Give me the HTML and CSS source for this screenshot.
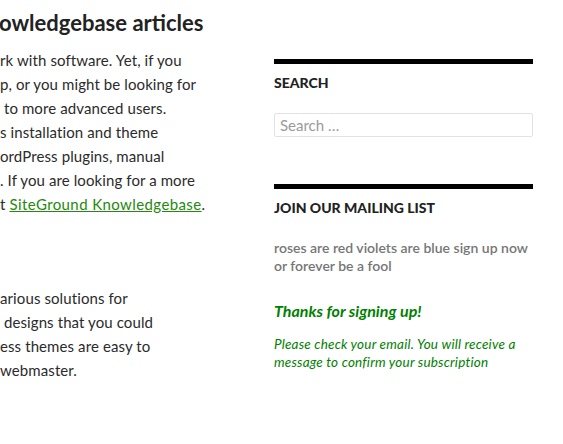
FILE: index.html
```html
<!DOCTYPE html>
<html>
<head>
<meta charset="utf-8">
<link rel="stylesheet" href="styles.css">
</head>
<body>
<div class="page">
  <main class="content">
    <h1 class="title">owledgebase articles</h1>
    <p class="para">rk with software. Yet, if you<br>p, or you might be looking for<br>&nbsp;to more advanced users.<br>s installation and theme<br>ordPress plugins, manual<br>. If you are looking for a more<br>t <a class="link" href="#">SiteGround Knowledgebase</a>.</p>
    <p class="para para-second">arious solutions for<br>&nbsp;designs that you could<br>ess themes are easy to<br>webmaster.</p>
  </main>
  <aside class="sidebar">
    <section class="widget">
      <h2 class="widget-title">Search</h2>
      <form class="search-form">
        <input class="search-field" type="search" placeholder="Search …">
      </form>
    </section>
    <section class="widget widget-mail">
      <h2 class="widget-title">Join our mailing list</h2>
      <p class="mail-desc">roses are red violets are blue sign up now or forever be a fool</p>
      <p class="thanks">Thanks for signing up!</p>
      <p class="confirm">Please check your email. You will receive a message to confirm your subscription</p>
    </section>
  </aside>
</div>
</body>
</html>
```
FILE: styles.css
```css
html, body {
  margin: 0;
  padding: 0;
  background: #fff;
}
body {
  font-family: Lato, "Open Sans", sans-serif;
  color: #2b2b2b;
  overflow: hidden;
}
.page {
  display: flex;
  align-items: flex-start;
  width: 563px;
}
.content {
  width: 274px;
  flex: none;
}
.title {
  font-size: 22px;
  font-weight: 700;
  line-height: 30px;
  margin: 8px 0 0 -1px;
  color: #222;
}
.para {
  font-size: 15px;
  line-height: 24px;
  letter-spacing: 0.1px;
  margin: 10px 0 0 0;
  white-space: nowrap;
}
.para-second {
  margin-top: 70px;
}
.link {
  color: #24890d;
  text-decoration: underline;
  letter-spacing: 0.4px;
}
.sidebar {
  width: 259px;
  flex: none;
  margin-top: 59px;
}
.widget {
  border-top: 5px solid #000;
}
.widget-title {
  font-size: 14px;
  font-weight: 900;
  text-transform: uppercase;
  line-height: 20px;
  margin: 9px 0 0 0;
  color: #222;
}
.search-form {
  margin: 20px 0 0 0;
}
.search-field {
  box-sizing: border-box;
  display: block;
  width: 100%;
  height: 24px;
  border: 1px solid #e2e2e2;
  border-radius: 2px;
  padding: 0 5px;
  font-family: Lato, sans-serif;
  font-size: 15px;
  color: #2b2b2b;
  outline: none;
}
.search-field::placeholder {
  color: #9a9a9a;
}
.widget-mail {
  margin-top: 47px;
}
.mail-desc {
  font-size: 14px;
  font-weight: 600;
  line-height: 18px;
  color: #767676;
  margin: 21px 0 0 0;
}
.thanks {
  font-size: 16px;
  font-weight: 700;
  font-style: italic;
  line-height: 20px;
  color: #008000;
  margin: 26px 0 0 0;
}
.confirm {
  font-size: 13.5px;
  font-style: italic;
  line-height: 18px;
  letter-spacing: 0.2px;
  color: #008000;
  margin: 14px 0 0 0;
}
```
